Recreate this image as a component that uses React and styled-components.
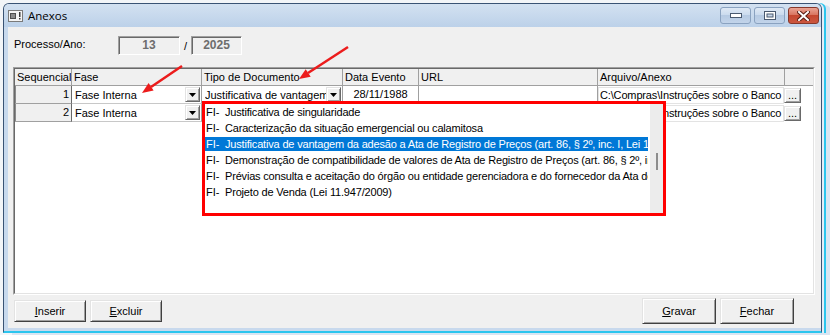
import React from "react";
import styled, { createGlobalStyle } from "styled-components";

const COLS = "57px 130px 141px 76px 179px 187px 28px";

const GlobalStyle = createGlobalStyle`
  html, body {
    margin: 0;
    padding: 0;
  }
  body {
    width: 830px;
    height: 335px;
    overflow: hidden;
    background: #f3f5f8;
    font-family: "Liberation Sans", Arial, sans-serif;
    font-size: 11px;
    color: #000;
  }
`;

const Screen = styled.div`
  position: relative;
  width: 830px;
  height: 335px;
  padding: 3px 0 0 3px;
  box-sizing: border-box;
  overflow: hidden;
`;

const Window = styled.div`
  width: 819px;
  height: 330px;
  box-sizing: border-box;
  border: 1px solid #3a5374;
  border-bottom: 2px solid #2bc5ee;
  border-radius: 6px 6px 0 0;
  background: #c8d9ed;
  box-shadow: 2px 0 0 #e4edf7, 4px 0 0 #2bc5ee, 9px 2px 0 #d9e5f2;
  display: flex;
  flex-direction: column;
`;

const TitleBar = styled.div`
  flex: none;
  height: 23px;
  display: flex;
  align-items: center;
  padding: 0 2px 0 4px;
  border-radius: 5px 5px 0 0;
  background: linear-gradient(#d3e1f1, #bcd1e9);
`;

const Title = styled.span`
  flex: 1;
  margin-left: 5px;
  font-family: "Open Sans", "Noto Sans", sans-serif;
  font-size: 11.5px;
  color: #000;
`;

const CaptionButtons = styled.div`
  display: flex;
  gap: 3px;
`;

const CapBtn = styled.div`
  width: 31px;
  height: 17px;
  box-sizing: border-box;
  border: 1px solid ${(p) => (p.$close ? "#86382b" : "#8aa2c0")};
  border-radius: 3px;
  background: ${(p) =>
    p.$close
      ? "linear-gradient(#eaa393 0%, #d97661 45%, #c5472f 50%, #cb5740 100%)"
      : "linear-gradient(#dfe9f5 0%, #cbdbee 45%, #b6cae3 50%, #c2d4ea 100%)"};
  display: flex;
  align-items: center;
  justify-content: center;
`;

const Client = styled.div`
  flex: none;
  height: 301px;
  margin-left: 4px;
  padding: 9px 5px 0;
  box-sizing: border-box;
  background: #f0f0f0;
  display: flex;
  flex-direction: column;
`;

const ProcRow = styled.div`
  display: flex;
  align-items: center;
  height: 19px;
`;

const Label = styled.span`
  width: 104px;
  margin: 0 0 2px 1px;
  line-height: 13px;
`;

const ValueBox = styled.div`
  width: ${(p) => p.$w}px;
  height: 19px;
  box-sizing: border-box;
  border: 1px solid;
  border-color: #a0a0a0 #ffffff #ffffff #a0a0a0;
  box-shadow: inset 1px 1px 0 #696969;
  background: #f0f0f0;
  color: #6d6d6d;
  font-weight: bold;
  font-size: 12px;
  line-height: 17px;
  text-align: center;
`;

const Slash = styled.span`
  width: 11px;
  text-align: center;
`;

const GridFrame = styled.div`
  margin-top: 12px;
  width: 802px;
  height: 228px;
  box-sizing: border-box;
  border: 1px solid;
  border-color: #a0a0a0 #ffffff #ffffff #a0a0a0;
`;

const GridBody = styled.div`
  position: relative;
  height: 100%;
  box-sizing: border-box;
  border: 1px solid;
  border-color: #696969 #e3e3e3 #e3e3e3 #696969;
  background: #fff;
`;

const GridRow = styled.div`
  display: grid;
  grid-template-columns: ${COLS};
  height: ${(p) => p.$h}px;
`;

const HeadCell = styled.div`
  padding-left: 2px;
  background: #f0f0f0;
  border-right: ${(p) => (p.$last ? "0" : "1px solid #a0a0a0")};
  border-bottom: 1px solid #a0a0a0;
  line-height: 16px;
  white-space: nowrap;
  overflow: hidden;
`;

const SeqCell = styled.div`
  padding-right: 2px;
  background: #f0f0f0;
  border-right: 1px solid #696969;
  border-bottom: 1px solid #a0a0a0;
  box-shadow: inset 1px 0 0 #8a8a8a;
  text-align: right;
  line-height: 17px;
`;

const ComboCell = styled.div`
  min-width: 0;
  display: flex;
  align-items: center;
  padding-left: 3px;
  background: #fff;
  border-right: 1px solid #a0a0a0;
  border-bottom: 1px solid #c8c8c8;
`;

const CellText = styled.span`
  flex: 1;
  min-width: 0;
  overflow: hidden;
  white-space: nowrap;
`;

const DropBtn = styled.span`
  flex: none;
  width: 15px;
  height: 15px;
  margin-right: 1px;
  box-sizing: border-box;
  background: #f0f0f0;
  border: 1px solid;
  border-color: #e3e3e3 #696969 #696969 #e3e3e3;
  box-shadow: inset 1px 1px 0 #fff, inset -1px -1px 0 #a0a0a0;
  display: flex;
  align-items: center;
  justify-content: center;
`;

const PlainCell = styled.div`
  background: #fff;
  border-right: 1px solid #a0a0a0;
  border-bottom: 1px solid #c8c8c8;
  line-height: 17px;
  text-align: ${(p) => p.$align || "left"};
`;

const FileCell = styled.div`
  grid-column: span 2;
  display: flex;
  align-items: center;
  background: #fff;
`;

const FileField = styled.div`
  width: 186px;
  height: 17px;
  box-sizing: border-box;
  padding-left: 1px;
  border: 1px solid #e3e3e3;
  line-height: 15px;
  letter-spacing: -0.15px;
  white-space: nowrap;
  overflow: hidden;
`;

const SmallBtn = styled.span`
  width: 17px;
  height: 15px;
  box-sizing: border-box;
  background: #f0f0f0;
  border: 1px solid;
  border-color: #e3e3e3 #696969 #696969 #e3e3e3;
  box-shadow: inset 1px 1px 0 #fff, inset -1px -1px 0 #a0a0a0;
  text-align: center;
  line-height: 12px;
`;

const Popup = styled.div`
  position: absolute;
  left: 187px;
  top: 32px;
  width: 464px;
  height: 115px;
  box-sizing: border-box;
  border: 3px solid #ff0000;
  background: #fff;
  display: flex;
`;

const PopList = styled.div`
  flex: 1;
  min-width: 0;
  padding-right: 2px;
`;

const PopItem = styled.div`
  height: 16px;
  line-height: 16px;
  padding-left: 1px;
  white-space: nowrap;
  overflow: hidden;
  letter-spacing: -0.18px;
  color: ${(p) => (p.$sel ? "#fff" : "#000")};
  background: ${(p) =>
    p.$sel
      ? "linear-gradient(transparent 1px, #0078d7 1px, #0078d7 15px, transparent 15px)"
      : "transparent"};
`;

const Code = styled.span`
  display: inline-block;
  width: 19px;
  letter-spacing: 0;
`;

const ScrollTrack = styled.div`
  flex: none;
  width: 13px;
  padding-top: 49px;
  box-sizing: border-box;
  background: #ececec;
  display: flex;
  flex-direction: column;
  align-items: center;
`;

const Thumb = styled.div`
  width: 2px;
  height: 17px;
  background: #8c8c8c;
`;

const ButtonBar = styled.div`
  margin-top: 3px;
  height: 26px;
  display: flex;
  align-items: center;
  gap: 4px;
`;

const Spacer = styled.div`
  flex: 1;
`;

const Btn = styled.button`
  width: ${(p) => p.$w}px;
  height: ${(p) => p.$h}px;
  margin: 0 ${(p) => p.$mr || 0}px 0 ${(p) => p.$ml || 0}px;
  padding: 0;
  box-sizing: border-box;
  background: #f0f0f0;
  border: 1px solid;
  border-color: #e3e3e3 #404040 #404040 #e3e3e3;
  box-shadow: inset 1px 1px 0 #fff, inset -1px -1px 0 #a0a0a0;
  font-family: "Liberation Sans", Arial, sans-serif;
  font-size: 11px;
  color: #000;
`;

const Overlay = styled.svg`
  position: absolute;
  left: 0;
  top: 0;
  pointer-events: none;
`;

const Arrow = () => (
  <svg width="7" height="4" viewBox="0 0 7 4">
    <polygon points="0,0 7,0 3.5,4" fill="#000" />
  </svg>
);

const items = [
  "Justificativa de singularidade",
  "Caracterização da situação emergencial ou calamitosa",
  "Justificativa de vantagem da adesão a Ata de Registro de Preços (art. 86, § 2º, inc. I, Lei 14.133/2021)",
  "Demonstração de compatibilidade de valores de Ata de Registro de Preços (art. 86, § 2º, inc. II, Lei 14.133/2021)",
  "Prévias consulta e aceitação do órgão ou entidade gerenciadora e do fornecedor da Ata de Registro de Preços",
  "Projeto de Venda (Lei 11.947/2009)",
];

const rows = [
  { seq: 1, fase: "Fase Interna", tipo: "Justificativa de vantagem", data: "28/11/1988" },
  { seq: 2, fase: "Fase Interna", tipo: "", data: "" },
];

function DataRow({ row }) {
  return (
    <GridRow $h={18}>
      <SeqCell>{row.seq}</SeqCell>
      <ComboCell>
        <CellText>{row.fase}</CellText>
        <DropBtn>
          <Arrow />
        </DropBtn>
      </ComboCell>
      <ComboCell>
        <CellText>{row.tipo}</CellText>
        {row.tipo && (
          <DropBtn>
            <Arrow />
          </DropBtn>
        )}
      </ComboCell>
      <PlainCell $align="center">{row.data}</PlainCell>
      <PlainCell />
      <FileCell>
        <FileField>C:\Compras\Instruções sobre o Banco</FileField>
        <SmallBtn>...</SmallBtn>
      </FileCell>
    </GridRow>
  );
}

export default function App() {
  return (
    <>
      <GlobalStyle />
      <Screen>
        <Window>
          <TitleBar>
            <svg width="15" height="12" viewBox="0 0 15 12">
              <rect x="0.5" y="0.5" width="14" height="11" fill="#f4f4f4" stroke="#7a7a7a" />
              <rect x="2" y="3" width="6" height="6" fill="#4d4d4d" />
              <rect x="3" y="4" width="4" height="4" fill="#8a8a8a" />
              <rect x="11" y="2" width="1.5" height="5" fill="#3a3a3a" />
              <rect x="11" y="8" width="1.5" height="1.5" fill="#3a3a3a" />
            </svg>
            <Title>Anexos</Title>
            <CaptionButtons>
              <CapBtn>
                <svg width="12" height="5" viewBox="0 0 12 5">
                  <rect x="0.5" y="0.5" width="11" height="4" fill="#fff" stroke="#4a5a70" />
                </svg>
              </CapBtn>
              <CapBtn>
                <svg width="12" height="9" viewBox="0 0 12 9">
                  <rect x="0.5" y="0.5" width="11" height="8" fill="#fff" stroke="#4a5a70" />
                  <rect x="3" y="3" width="6" height="3" fill="#c9d8ea" stroke="#4a5a70" strokeWidth="1" />
                </svg>
              </CapBtn>
              <CapBtn $close>
                <svg width="13" height="10" viewBox="0 0 13 10">
                  <path d="M2 1 L11 9 M11 1 L2 9" stroke="#5a1e14" strokeWidth="4" strokeLinecap="square" />
                  <path d="M2 1 L11 9 M11 1 L2 9" stroke="#fff" strokeWidth="2" strokeLinecap="square" />
                </svg>
              </CapBtn>
            </CaptionButtons>
          </TitleBar>

          <Client>
            <ProcRow>
              <Label>Processo/Ano:</Label>
              <ValueBox $w={62}>13</ValueBox>
              <Slash>/</Slash>
              <ValueBox $w={51}>2025</ValueBox>
            </ProcRow>

            <GridFrame>
              <GridBody>
                <GridRow $h={17}>
                  <HeadCell>Sequencial</HeadCell>
                  <HeadCell>Fase</HeadCell>
                  <HeadCell>Tipo de Documento</HeadCell>
                  <HeadCell>Data Evento</HeadCell>
                  <HeadCell>URL</HeadCell>
                  <HeadCell>Arquivo/Anexo</HeadCell>
                  <HeadCell $last />
                </GridRow>
                {rows.map((r) => (
                  <DataRow key={r.seq} row={r} />
                ))}

                <Popup>
                  <PopList>
                    {items.map((t, i) => (
                      <PopItem key={i} $sel={i === 2}>
                        <Code>FI-</Code>
                        {t}
                      </PopItem>
                    ))}
                  </PopList>
                  <ScrollTrack>
                    <Thumb />
                  </ScrollTrack>
                </Popup>
              </GridBody>
            </GridFrame>

            <ButtonBar>
              <Btn $w={72} $h={22} $ml={1}>
                <u>I</u>nserir
              </Btn>
              <Btn $w={72} $h={22}>
                <u>E</u>xcluir
              </Btn>
              <Spacer />
              <Btn $w={74} $h={26}>
                <u>G</u>ravar
              </Btn>
              <Btn $w={74} $h={26} $mr={22}>
                <u>F</u>echar
              </Btn>
            </ButtonBar>
          </Client>
        </Window>

        <Overlay width="830" height="335" viewBox="0 0 830 335">
          <line x1="182" y1="66" x2="151" y2="87" stroke="#ec1c1c" strokeWidth="2.5" />
          <polygon points="142,93 153.6,90.6 148.6,83.1" fill="#ec1c1c" />
          <line x1="348" y1="47" x2="308" y2="73" stroke="#ec1c1c" strokeWidth="2.5" />
          <polygon points="299,79 310.7,76.8 305.7,69.2" fill="#ec1c1c" />
        </Overlay>
      </Screen>
    </>
  );
}
